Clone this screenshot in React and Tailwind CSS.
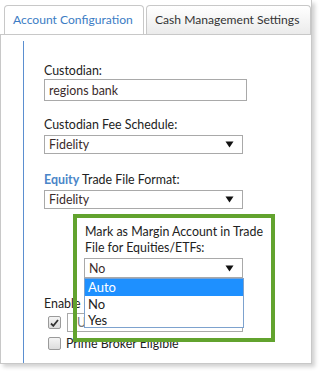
import React from 'react';

const FONT = "font-['Lato','Noto_Sans',sans-serif]";

function Select({ value, className = '' }) {
  return (
    <div className={`flex items-center justify-between bg-white border border-[#a9a9a9] pl-[4px] pr-[8px] text-[#3a2a2a] ${className}`}>
      <span>{value}</span>
      <svg width="9" height="7" viewBox="0 0 9 7">
        <path d="M0.5 0.5 L8.5 0.5 L4.5 6.5 Z" fill="#111" />
      </svg>
    </div>
  );
}

function Checkbox({ checked }) {
  return (
    <div className="w-[13px] h-[13px] rounded-[2px] border border-[#9a9a9a] bg-gradient-to-b from-[#f4f4f4] to-[#dcdcdc] flex items-center justify-center">
      {checked && (
        <svg width="9" height="8" viewBox="0 0 9 8">
          <path d="M1 4.5 L3.3 6.8 L8 1" stroke="#333" strokeWidth="1.8" fill="none" />
        </svg>
      )}
    </div>
  );
}

export default function App() {
  return (
    <div className={`w-[321px] h-[374px] bg-white overflow-hidden text-[12.4px] leading-[19px] text-[#222] ${FONT}`}>
      <div className="w-[312px] h-[364px] flex flex-col border-r border-[#c8c8c8] shadow-[3px_3px_4px_rgba(0,0,0,0.18)]">
        {/* Tabs */}
        <div className="flex items-end gap-[2px] pt-[5px] pl-[4px] h-[35px] border-b border-[#c8c8c8]">
          <div className="h-[29px] w-[140px] flex items-center pl-[8px] pb-[1px] whitespace-nowrap rounded-t-[4px] border border-b-0 border-[#c8c8c8] bg-white text-[#3b7cc4] text-[12.1px]">
            Account Configuration
          </div>
          <div className="h-[29px] w-[165px] flex items-center pl-[8px] pb-[1px] whitespace-nowrap rounded-t-[4px] border border-b-0 border-[#c8c8c8] bg-gradient-to-b from-white to-[#ebebeb] text-[#333] text-[12.1px]">
            Cash Management Settings
          </div>
        </div>

        {/* Content */}
        <div className="flex-1 flex flex-col border-l border-b border-[#c8c8c8] pt-[6px]">
          <div className="flex-1 ml-[22px] border-l border-[#5b8fd0] pl-[20px] pt-[20px]">
            <div>Custodian:</div>
            <div className="w-[203px] h-[22px] mt-[-1px] border border-[#a9a9a9] pl-[4px] flex items-center text-[#3a2a2a]">
              regions bank
            </div>

            <div className="mt-[14px]">Custodian Fee Schedule:</div>
            <Select value="Fidelity" className="w-[199px] h-[19px] mt-[1px]" />

            <div className="mt-[16px]">
              <span className="text-[#4a86c8] font-bold">Equity</span> Trade File Format:
            </div>
            <Select value="Fidelity" className="w-[199px] h-[19px] mt-[1px]" />

            {/* Margin field */}
            <div className="relative ml-[40px] mt-[15px] w-[160px]">
              <div className="leading-[16px] pl-[1px] whitespace-nowrap">
                Mark as Margin Account in Trade
                <br />
                File for Equities/ETFs:
              </div>
              <Select value="No" className="w-[159px] h-[20px] mt-[2px] border-[#7da2ce]" />
              <div className="absolute z-20 left-0 top-[54px] w-[160px] bg-white border border-[#7da2ce] leading-[16px] text-[13px]">
                <div className="bg-[#1e90ff] text-white pl-[3px] h-[17px]">Auto</div>
                <div className="pl-[3px] h-[16px]">No</div>
                <div className="pl-[3px] h-[15px]">Yes</div>
              </div>
              <div className="absolute z-30 left-[-11px] top-[-10px] w-[202px] h-[128px] border-[4px] border-[#62a32e] pointer-events-none" />
            </div>

            <div className="mt-[16px] whitespace-nowrap">Enable Cash Sweep:</div>
            <div className="flex items-center gap-[6px] ml-[4px]">
              <Checkbox checked />
              <div className="w-[176px] h-[19px] border border-[#a9a9a9] pl-[9px] flex items-center text-[#777]">
                Use Default
              </div>
            </div>
            <div className="flex items-center gap-[5px] ml-[4px] mt-[2px]">
              <Checkbox />
              <span>Prime Broker Eligible</span>
            </div>
          </div>
        </div>
      </div>
    </div>
  );
}
